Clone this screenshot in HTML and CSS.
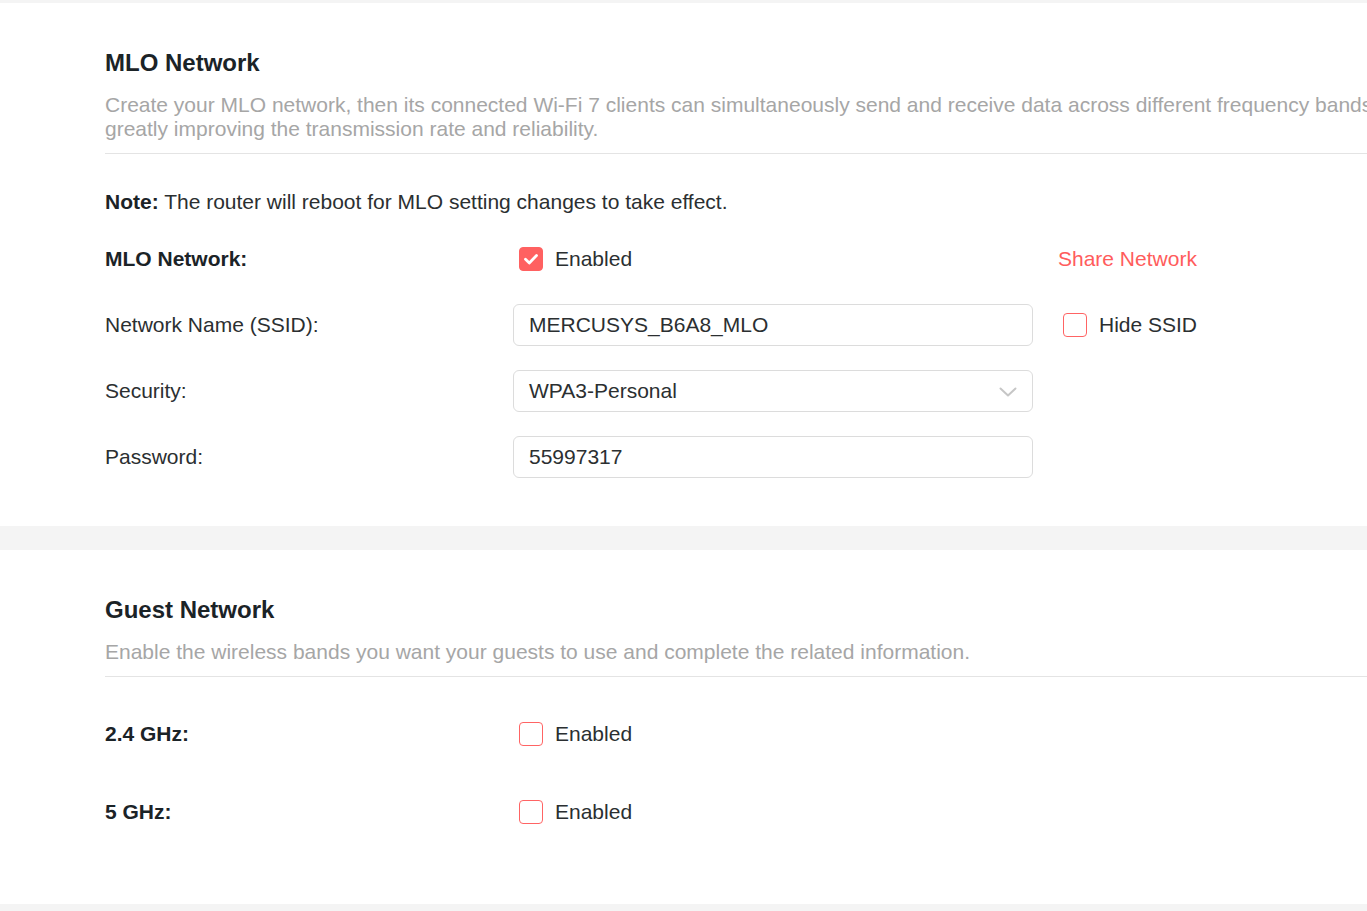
FILE: index.html
```html
<!DOCTYPE html>
<html lang="en">
<head>
    <meta charset="UTF-8">
    <meta name="viewport" content="width=device-width, initial-scale=1.0">
    <title>Wireless - MLO & Guest Network</title>
    <link rel="stylesheet" href="styles.css">
</head>
<body>
    <div class="page">
        <div class="panel">
            <div class="panel-head">
                <h2>MLO Network</h2>
                <p class="desc">Create your MLO network, then its connected Wi-Fi 7 clients can simultaneously send and receive data across different frequency bands, greatly improving the transmission rate and reliability.</p>
            </div>

            <p class="note"><strong>Note:</strong> The router will reboot for MLO setting changes to take effect.</p>

            <div class="form">
                <div class="row">
                    <div class="label bold">MLO Network:</div>
                    <div class="control">
                        <label class="check checked">
                            <span class="box">
                                <svg viewBox="0 0 24 24" width="24" height="24"><path d="M6.5 12.3l3.8 3.6 7.2-7.4" fill="none" stroke="#fff" stroke-width="2.8" stroke-linecap="round" stroke-linejoin="round"/></svg>
                            </span>
                            <span>Enabled</span>
                        </label>
                    </div>
                    <div class="extra"><a class="link" href="#">Share Network</a></div>
                </div>

                <div class="row">
                    <div class="label">Network Name (SSID):</div>
                    <div class="control">
                        <div class="field">MERCUSYS_B6A8_MLO</div>
                    </div>
                    <div class="extra">
                        <label class="check">
                            <span class="box"></span>
                            <span>Hide SSID</span>
                        </label>
                    </div>
                </div>

                <div class="row">
                    <div class="label">Security:</div>
                    <div class="control">
                        <div class="field select">
                            <span>WPA3-Personal</span>
                            <svg class="chevron" viewBox="0 0 18 10" width="18" height="10"><path d="M1.5 1.5l7.5 7 7.5-7" fill="none" stroke="#c6c6c6" stroke-width="2" stroke-linecap="round" stroke-linejoin="round"/></svg>
                        </div>
                    </div>
                </div>

                <div class="row">
                    <div class="label">Password:</div>
                    <div class="control">
                        <div class="field">55997317</div>
                    </div>
                </div>
            </div>
        </div>

        <div class="panel guest">
            <div class="panel-head">
                <h2>Guest Network</h2>
                <p class="desc">Enable the wireless bands you want your guests to use and complete the related information.</p>
            </div>

            <div class="form wide">
                <div class="row">
                    <div class="label bold">2.4 GHz:</div>
                    <div class="control">
                        <label class="check">
                            <span class="box"></span>
                            <span>Enabled</span>
                        </label>
                    </div>
                </div>
                <div class="row">
                    <div class="label bold">5 GHz:</div>
                    <div class="control">
                        <label class="check">
                            <span class="box"></span>
                            <span>Enabled</span>
                        </label>
                    </div>
                </div>
            </div>
        </div>
    </div>
</body>
</html>
```

FILE: styles.css
```css
html, body {
    margin: 0;
    padding: 0;
}
body {
    font-family: Arial, 'Liberation Sans', sans-serif;
    background: #f4f4f4;
    color: #2b2f31;
    overflow: hidden;
    height: 911px;
}
.page {
    width: 1510px;
    padding-top: 3px;
}
.panel {
    background: #fff;
    padding: 44px 105px 48px;
    margin-bottom: 24px;
}
.panel.guest {
    padding-bottom: 71px;
    margin-bottom: 0;
}
.panel-head {
    border-bottom: 1px solid #e4e4e4;
    padding-bottom: 12px;
}
h2 {
    margin: 0;
    font-size: 24px;
    line-height: 32px;
    font-weight: bold;
    color: #1b2327;
}
.desc {
    margin: 14px 0 0;
    font-size: 21px;
    line-height: 24px;
    color: #a6a6a6;
}
.note {
    margin: 36px 0 0;
    font-size: 21px;
    line-height: 24px;
    color: #2b2f31;
}
.note strong {
    color: #1b2327;
}
.form {
    margin-top: 24px;
    display: flex;
    flex-direction: column;
    gap: 24px;
}
.form.wide {
    margin-top: 36px;
    gap: 36px;
}
.row {
    display: flex;
    align-items: center;
    height: 42px;
    font-size: 21px;
}
.label {
    width: 408px;
    color: #2b2f31;
}
.label.bold {
    font-weight: bold;
    color: #1b2327;
}
.control {
    width: 520px;
}
.extra {
    margin-left: 25px;
}
.check {
    display: flex;
    align-items: center;
    gap: 12px;
    cursor: pointer;
    color: #2b2f31;
}
.control .check {
    margin-left: 6px;
}
.extra .check {
    margin-left: 5px;
}
.box {
    width: 24px;
    height: 24px;
    box-sizing: border-box;
    border: 1px solid #ff6464;
    border-radius: 4px;
    background: #fff;
    display: block;
}
.box svg {
    display: block;
    margin: -1px;
}
.check.checked .box {
    background: #ff6161;
    border-color: #ff6161;
}
.link {
    color: #ff5c5c;
    text-decoration: none;
}
.field {
    box-sizing: border-box;
    height: 42px;
    border: 1px solid #dcdcdc;
    border-radius: 6px;
    padding: 0 15px;
    display: flex;
    align-items: center;
    color: #2b2f31;
    font-size: 21px;
}
.select {
    justify-content: space-between;
}
.chevron {
    display: block;
    margin-top: 2px;
}
```
